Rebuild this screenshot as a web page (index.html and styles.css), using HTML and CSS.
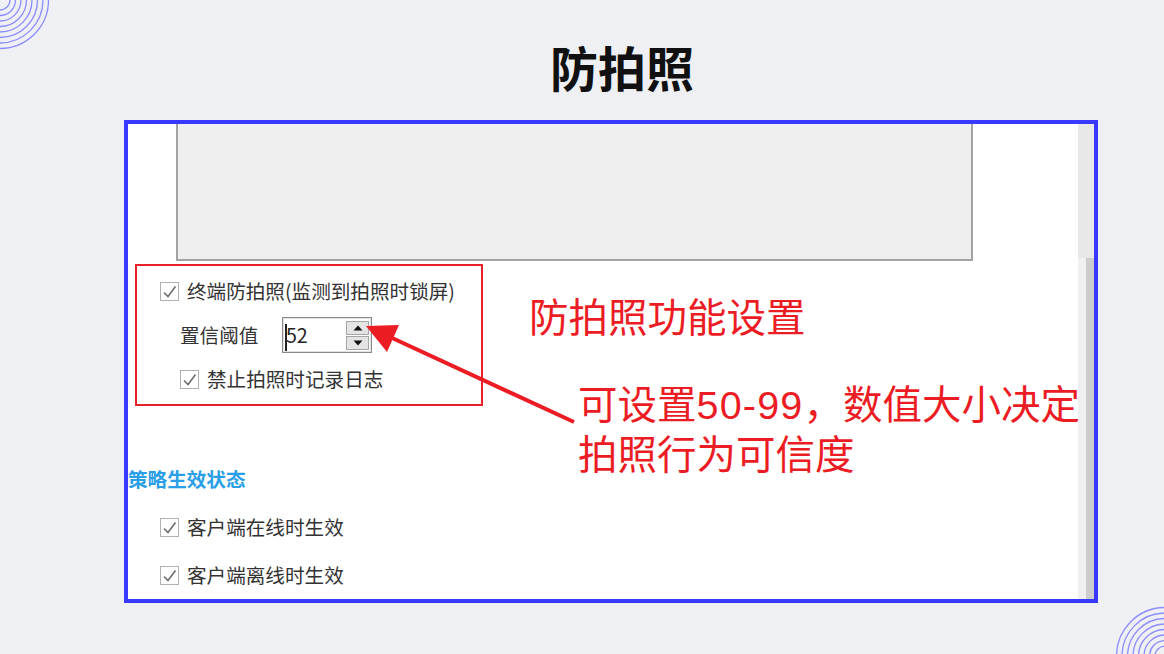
FILE: index.html
```html
<!DOCTYPE html>
<html lang="zh-CN">
<head>
    <meta charset="UTF-8">
    <meta name="viewport" content="width=device-width, initial-scale=1.0">
    <title>防拍照</title>
    <link rel="stylesheet" href="styles.css">
</head>
<body>
    <svg class="rings rings-tl" width="60" height="60" viewBox="0 0 60 60">
        <circle cx="0" cy="0" r="10" />
        <circle cx="0" cy="0" r="15.5" />
        <circle cx="0" cy="0" r="21" />
        <circle cx="0" cy="0" r="26.5" />
        <circle cx="0" cy="0" r="32" />
        <circle cx="0" cy="0" r="37.5" />
        <circle cx="0" cy="0" r="43" />
        <circle cx="0" cy="0" r="48.5" />
    </svg>
    <svg class="rings rings-br" width="60" height="60" viewBox="0 0 60 60">
        <circle cx="61" cy="62" r="10" />
        <circle cx="61" cy="62" r="15.5" />
        <circle cx="61" cy="62" r="21" />
        <circle cx="61" cy="62" r="26.5" />
        <circle cx="61" cy="62" r="32" />
        <circle cx="61" cy="62" r="37.5" />
        <circle cx="61" cy="62" r="43" />
        <circle cx="61" cy="62" r="48.5" />
    </svg>

    <header class="title">
        <h1>防拍照</h1>
    </header>

    <main class="frame">
        <div class="panel">
            <div class="preview"></div>

            <div class="highlight">
                <div class="row">
                    <span class="check"><svg width="19" height="19" viewBox="0 0 19 19"><rect x="0.5" y="0.5" width="18" height="18" /><path d="M4 10.5 L8 14.5 L15.5 4.5" /></svg></span>
                    <span class="label">终端防拍照(监测到拍照时锁屏)</span>
                </div>
                <div class="row row-num">
                    <span class="label">置信阈值</span>
                    <div class="spin">
                        <span class="spin-value"><span class="caret"></span>52</span>
                        <div class="spin-btns">
                            <span class="spin-btn"><svg width="10" height="6" viewBox="0 0 10 6"><path d="M0.5 5.5 L5 0.5 L9.5 5.5 Z" /></svg></span>
                            <span class="spin-btn"><svg width="10" height="6" viewBox="0 0 10 6"><path d="M0.5 0.5 L5 5.5 L9.5 0.5 Z" /></svg></span>
                        </div>
                    </div>
                </div>
                <div class="row row-sub">
                    <span class="check"><svg width="19" height="19" viewBox="0 0 19 19"><rect x="0.5" y="0.5" width="18" height="18" /><path d="M4 10.5 L8 14.5 L15.5 4.5" /></svg></span>
                    <span class="label">禁止拍照时记录日志</span>
                </div>
            </div>

            <h3 class="section">策略生效状态</h3>
            <div class="row row-state">
                <span class="check"><svg width="19" height="19" viewBox="0 0 19 19"><rect x="0.5" y="0.5" width="18" height="18" /><path d="M4 10.5 L8 14.5 L15.5 4.5" /></svg></span>
                <span class="label">客户端在线时生效</span>
            </div>
            <div class="row row-state">
                <span class="check"><svg width="19" height="19" viewBox="0 0 19 19"><rect x="0.5" y="0.5" width="18" height="18" /><path d="M4 10.5 L8 14.5 L15.5 4.5" /></svg></span>
                <span class="label">客户端离线时生效</span>
            </div>
        </div>

        <div class="scrollbar">
            <div class="scroll-track"></div>
            <div class="scroll-lower">
                <div class="scroll-gap"></div>
                <div class="scroll-thumb"></div>
            </div>
        </div>

        <!-- annotations drawn over the screenshot -->
        <p class="note note-title">防拍照功能设置</p>
        <p class="note note-range">可设置<span class="num">50-99</span>，数值大小决定</p>
        <p class="note note-trust">拍照行为可信度</p>
        <svg class="arrow" width="966" height="475" viewBox="0 0 966 475">
            <line x1="446" y1="298" x2="262" y2="213" />
            <path d="M238 202 L271 201 L259 228 Z" />
        </svg>
    </main>
</body>
</html>
```

FILE: styles.css
```css
body {
    margin: 0;
    width: 1164px;
    height: 654px;
    background-color: #eff0f4;
    font-family: "Noto Sans CJK SC", "Liberation Sans", sans-serif;
    color: #333;
    position: relative;
    overflow: hidden;
}

.rings {
    position: absolute;
}

.rings circle {
    fill: none;
    stroke: #8c8cff;
    stroke-width: 1.3;
}

.rings-tl {
    left: 0;
    top: 0;
}

.rings-br {
    right: 0;
    bottom: 0;
}

.title {
    height: 120px;
    box-sizing: border-box;
    padding-top: 42px;
    text-align: center;
}

.title h1 {
    margin: 0 0 0 80px;
    font-size: 48px;
    line-height: 48px;
    font-weight: 700;
    color: #111;
}

.frame {
    position: relative;
    margin-left: 124px;
    width: 974px;
    height: 483px;
    box-sizing: border-box;
    border: 4px solid #3838ff;
    background: #fff;
    display: flex;
}

.panel {
    flex: 1;
    overflow: hidden;
}

.preview {
    margin-left: 48px;
    width: 797px;
    height: 137px;
    box-sizing: border-box;
    background: #efefef;
    border: 2px solid #a3a3a3;
    border-top: none;
}

.highlight {
    margin: 3px 0 0 7px;
    width: 348px;
    height: 142px;
    box-sizing: border-box;
    border: 2px solid #e8202a;
    padding: 13px 0 0 23px;
}

.row {
    display: flex;
    align-items: center;
    height: 24px;
    font-size: 19.6px;
    line-height: 24px;
}

.check {
    width: 19px;
    height: 19px;
    margin-right: 8px;
    display: flex;
}

.check rect {
    fill: #fff;
    stroke: #b0b0b0;
}

.check path {
    fill: none;
    stroke: #6e6e6e;
    stroke-width: 1.6;
}

.row-num {
    height: 36px;
    margin: 14px 0 0 20px;
}

.row-num .label {
    width: 102px;
}

.spin {
    width: 90px;
    height: 36px;
    box-sizing: border-box;
    border: 1px solid #8a8a8a;
    box-shadow: inset 0 0 0 1px #e2e2e2;
    display: flex;
    align-items: center;
    justify-content: space-between;
    padding: 0 2px 0 3px;
}

.spin-value {
    position: relative;
    font-size: 19.6px;
    color: #222;
}

.caret {
    position: absolute;
    left: -1px;
    top: 1px;
    width: 2px;
    height: 27px;
    background: #222;
}

.spin-btns {
    display: flex;
    flex-direction: column;
    gap: 1px;
}

.spin-btn {
    width: 23px;
    height: 14px;
    box-sizing: border-box;
    border: 1px solid #a5a5a5;
    background: #e4e4e4;
    display: flex;
    align-items: center;
    justify-content: center;
}

.spin-btn path {
    fill: #111;
}

.row-sub {
    margin: 14px 0 0 20px;
}

.section {
    margin: 61px 0 0 0;
    height: 24px;
    font-size: 19.6px;
    line-height: 24px;
    font-weight: 700;
    color: #2a9ee6;
}

.row-state {
    margin: 24px 0 0 32px;
}

.scrollbar {
    width: 16px;
    display: flex;
    flex-direction: column;
}

.scroll-track {
    height: 134px;
    background: #e8e8e8;
}

.scroll-lower {
    flex: 1;
    display: flex;
}

.scroll-gap {
    width: 8px;
    background: #f0f0f0;
}

.scroll-thumb {
    flex: 1;
    background: #cdcdcd;
}

.note {
    position: absolute;
    margin: 0;
    color: #ec1c24;
    font-family: "Liberation Sans", "Noto Sans CJK SC", sans-serif;
    font-size: 39.5px;
    line-height: 46px;
    white-space: nowrap;
}

.note .num {
    letter-spacing: 1.2px;
}

.note-title {
    left: 401px;
    top: 171px;
}

.note-range {
    left: 450px;
    top: 258px;
}

.note-trust {
    left: 450px;
    top: 308px;
}

.arrow {
    position: absolute;
    left: 0;
    top: 0;
}

.arrow line {
    stroke: #ec1c24;
    stroke-width: 4;
}

.arrow path {
    fill: #ec1c24;
}
```
